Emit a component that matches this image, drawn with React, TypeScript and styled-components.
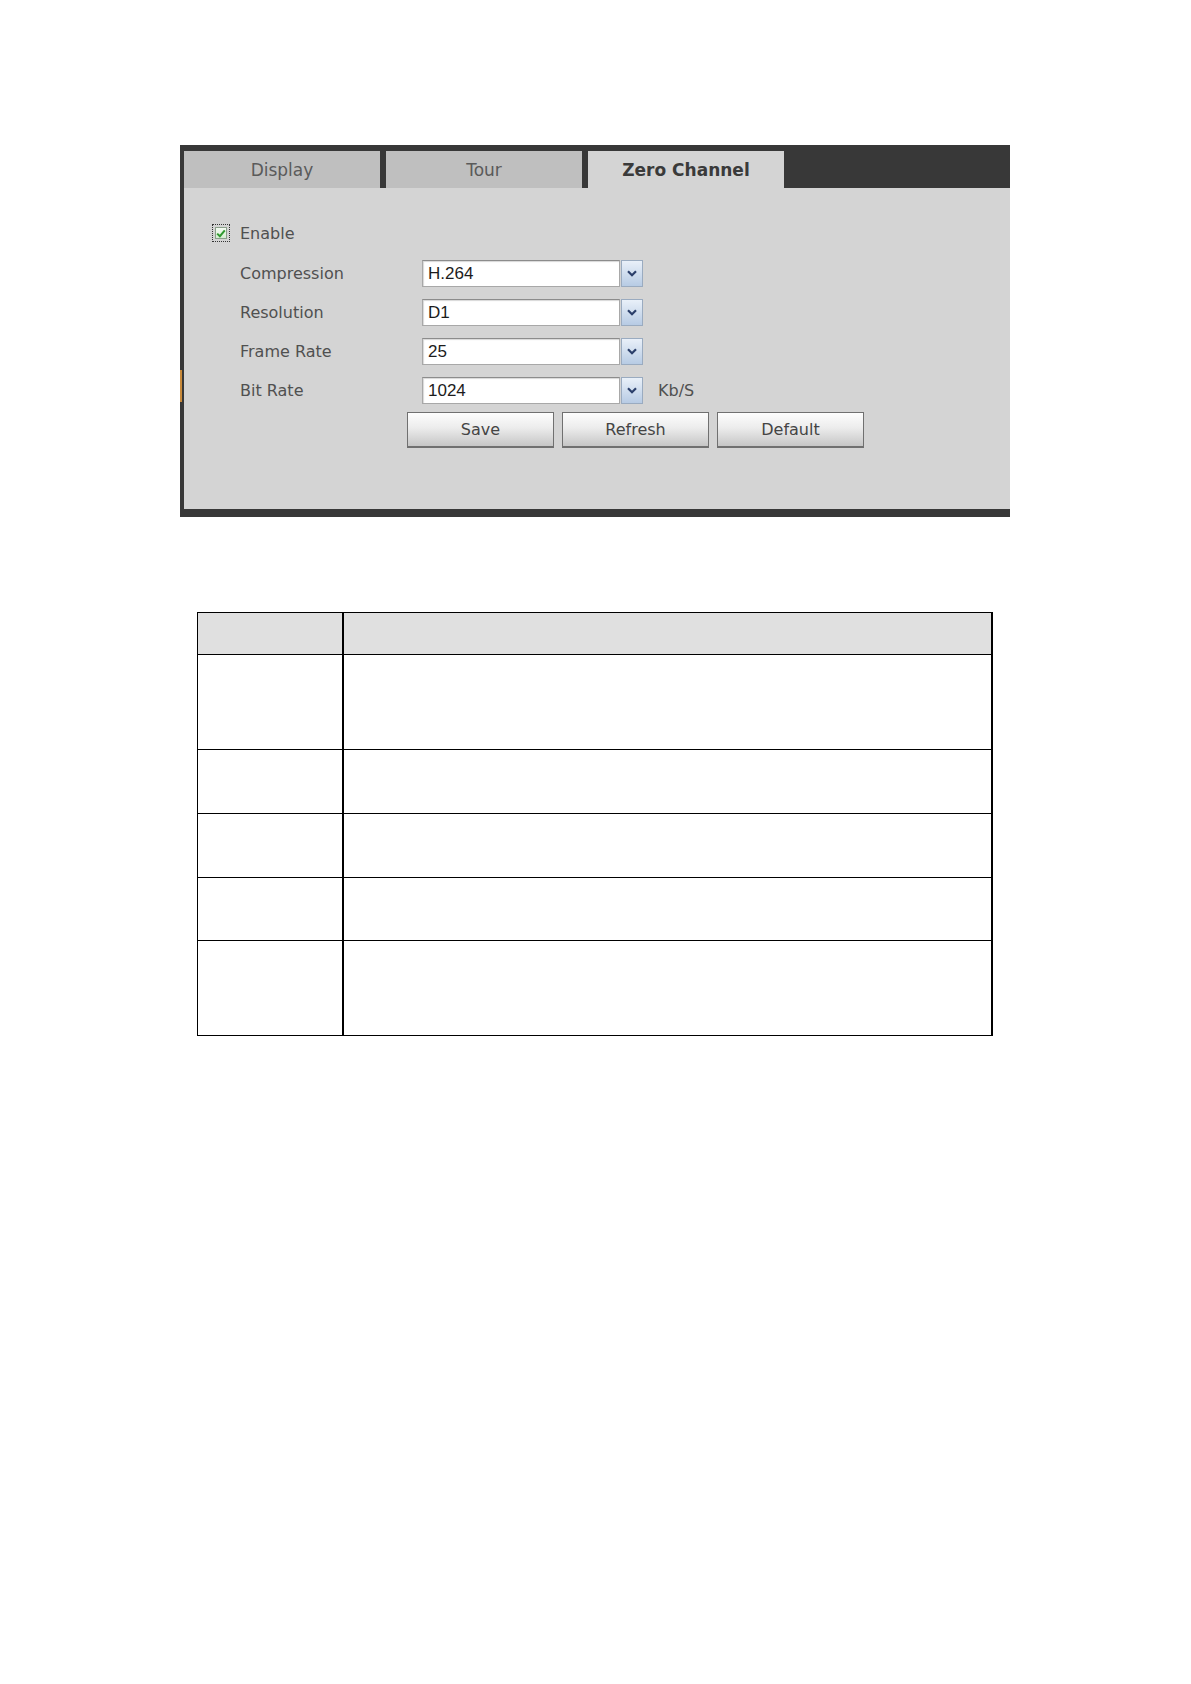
import styled, { createGlobalStyle } from "styled-components";

const GlobalStyle = createGlobalStyle`
  body {
    margin: 0;
    background: #fff;
    font-family: "DejaVu Sans", sans-serif;
  }
`;

const Page = styled.div`
  width: 1191px;
  min-height: 1684px;
  padding-top: 145px;
  box-sizing: border-box;
`;

const Panel = styled.section`
  position: relative;
  margin-left: 180px;
  width: 830px;
  background: #d4d4d4;
  border-left: 4px solid #383838;
  border-bottom: 8px solid #383838;
  box-sizing: border-box;

  &::before {
    content: "";
    position: absolute;
    left: -4px;
    top: 225px;
    width: 2px;
    height: 32px;
    background: #c98a3a;
  }
`;

const TabBar = styled.div`
  display: flex;
  gap: 6px;
  padding-top: 6px;
  background: #383838;
`;

const Tab = styled.div<{ $active?: boolean }>`
  width: 196px;
  height: 37px;
  display: flex;
  align-items: center;
  justify-content: center;
  font-size: 17px;
  font-weight: ${({ $active }) => ($active ? "bold" : "normal")};
  color: ${({ $active }) => ($active ? "#3a3a3a" : "#5a5a5a")};
  background: ${({ $active }) => ($active ? "#d4d4d4" : "#bfbfbf")};
`;

const Content = styled.div`
  padding: 35px 0 61px 28px;
  color: #505050;
  font-size: 16px;
`;

const EnableRow = styled.label`
  display: flex;
  align-items: center;
  gap: 10px;
  height: 20px;
`;

const CheckBox = styled.span`
  width: 18px;
  height: 18px;
  box-sizing: border-box;
  border: 1px dotted #333;
  padding: 2px;
  display: flex;

  span {
    flex: 1;
    display: flex;
    align-items: center;
    justify-content: center;
    border: 1px solid #8aa08a;
    background: linear-gradient(#f4fbf2, #d3ecd0);
  }
`;

const Fields = styled.div`
  display: flex;
  flex-direction: column;
  gap: 12px;
  margin-top: 17px;
`;

const FieldRow = styled.div`
  display: flex;
  align-items: center;
  height: 27px;
  padding-left: 28px;
`;

const Label = styled.span`
  width: 182px;
`;

const Select = styled.div`
  display: flex;
  width: 221px;
  height: 27px;
`;

const SelectValue = styled.div`
  flex: 1;
  display: flex;
  align-items: center;
  padding-left: 5px;
  background: #fff;
  border: 1px solid #a8a8a8;
  border-top-color: #8c8c8c;
  box-shadow: inset 1px 1px 1px #d8d8d8;
  font-family: "Liberation Sans", Arial, sans-serif;
  font-size: 17px;
  color: #1c1c1c;
`;

const SelectButton = styled.div`
  width: 22px;
  margin-left: 1px;
  box-sizing: border-box;
  display: flex;
  align-items: center;
  justify-content: center;
  border: 1px solid #9aabc0;
  background: linear-gradient(#e9f0f9, #b7cbe4);
`;

const Unit = styled.span`
  margin-left: 15px;
`;

const ButtonRow = styled.div`
  display: flex;
  gap: 8px;
  margin-top: 8px;
  padding-left: 195px;
`;

const Button = styled.button`
  width: 147px;
  height: 36px;
  box-sizing: border-box;
  border: 1px solid #707070;
  border-bottom-width: 2px;
  background: linear-gradient(#fdfdfd 0%, #ececec 45%, #c6c6c6 100%);
  font-family: "DejaVu Sans", sans-serif;
  font-size: 16px;
  color: #444;
  padding: 0;
`;

const Table = styled.table`
  margin: 95px 0 0 197px;
  width: 796px;
  border-collapse: collapse;
  table-layout: fixed;

  td {
    border: 1px solid #000;
    padding: 0;
  }

  td:first-child {
    width: 144px;
    border-right-width: 2px;
  }

  td:last-child {
    border-right-width: 2px;
  }
`;

const Row = styled.tr<{ $h: number; $head?: boolean }>`
  height: ${({ $h }) => $h}px;
  background: ${({ $head }) => ($head ? "#e0e0e0" : "#fff")};
`;

const Chevron = () => (
  <svg width="10" height="7" viewBox="0 0 10 7">
    <path d="M1 1.2 L5 5.2 L9 1.2" fill="none" stroke="#2b3f6b" strokeWidth="2.2" />
  </svg>
);

const Check = () => (
  <svg width="10" height="9" viewBox="0 0 10 9">
    <path d="M1.2 4.6 L3.9 7.2 L8.8 1.4" fill="none" stroke="#2f9a2f" strokeWidth="2" />
  </svg>
);

const fields = [
  { label: "Compression", value: "H.264" },
  { label: "Resolution", value: "D1" },
  { label: "Frame Rate", value: "25" },
  { label: "Bit Rate", value: "1024", unit: "Kb/S" },
];

const rowHeights = [95, 64, 64, 63, 95];

const App = () => {
  return (
    <Page>
      <GlobalStyle />
      <Panel>
        <TabBar>
          <Tab>Display</Tab>
          <Tab>Tour</Tab>
          <Tab $active>Zero Channel</Tab>
        </TabBar>
        <Content>
          <EnableRow>
            <CheckBox>
              <span>
                <Check />
              </span>
            </CheckBox>
            Enable
          </EnableRow>
          <Fields>
            {fields.map((f) => (
              <FieldRow key={f.label}>
                <Label>{f.label}</Label>
                <Select>
                  <SelectValue>{f.value}</SelectValue>
                  <SelectButton>
                    <Chevron />
                  </SelectButton>
                </Select>
                {f.unit && <Unit>{f.unit}</Unit>}
              </FieldRow>
            ))}
          </Fields>
          <ButtonRow>
            <Button>Save</Button>
            <Button>Refresh</Button>
            <Button>Default</Button>
          </ButtonRow>
        </Content>
      </Panel>
      <Table>
        <tbody>
          <Row $h={42} $head>
            <td />
            <td />
          </Row>
          {rowHeights.map((h, i) => (
            <Row key={i} $h={h}>
              <td />
              <td />
            </Row>
          ))}
        </tbody>
      </Table>
    </Page>
  );
};

export default App;
